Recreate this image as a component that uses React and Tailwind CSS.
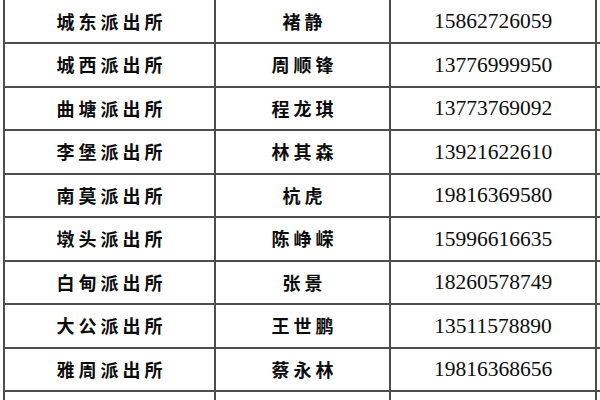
import React from 'react';

const ROWS = [
  ['城东派出所', '褚静', '15862726059'],
  ['城西派出所', '周顺锋', '13776999950'],
  ['曲塘派出所', '程龙琪', '13773769092'],
  ['李堡派出所', '林其森', '13921622610'],
  ['南莫派出所', '杭虎', '19816369580'],
  ['墩头派出所', '陈峥嵘', '15996616635'],
  ['白甸派出所', '张景', '18260578749'],
  ['大公派出所', '王世鹏', '13511578890'],
  ['雅周派出所', '蔡永林', '19816368656'],
  ['', '', ''],
];

export default function App() {
  return (
    <div className="h-[400px] w-[600px] overflow-hidden bg-white pl-[3px] text-[#0c0c0c]">
      {ROWS.map(([station, name, phone], i) => (
        <div
          key={i}
          className={`flex border-b-2 border-[#4d4d4d] ${i === 0 ? 'h-[44px]' : 'h-[43.5px]'}`}
        >
          {/* station */}
          <div className="flex w-[211px] items-center justify-center border-l-2 border-[#4d4d4d] pl-[4px] font-['Noto_Sans_CJK_SC',sans-serif] text-[18px] font-bold tracking-[4px]">
            {station}
          </div>
          {/* contact */}
          <div className="flex w-[175px] items-center justify-center border-l-2 border-[#4d4d4d] pl-[4px] font-['Noto_Sans_CJK_SC',sans-serif] text-[18px] font-bold tracking-[4px]">
            {name}
          </div>
          {/* phone */}
          <div className="flex w-[208px] items-center justify-center border-x-2 border-[#4d4d4d] font-['Liberation_Serif',serif] text-[21.5px]">
            {phone}
          </div>
        </div>
      ))}
    </div>
  );
}
